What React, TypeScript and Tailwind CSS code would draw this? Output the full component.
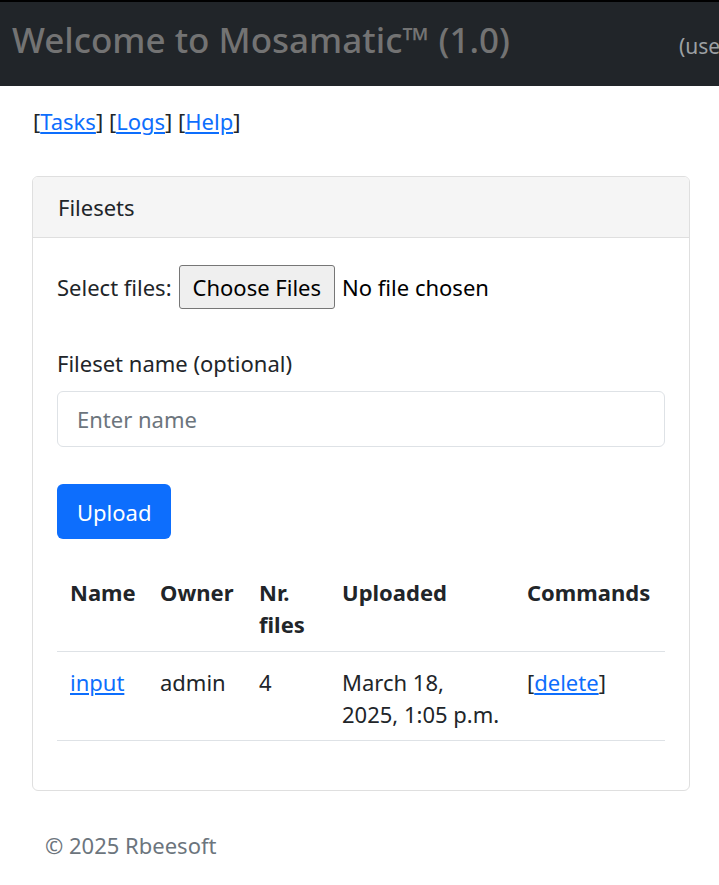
import React from 'react'

const font = { fontFamily: '"Noto Sans", "Open Sans", sans-serif' }

const rows = [
  { name: 'input', owner: 'admin', files: '4', uploaded: 'March 18, 2025, 1:05 p.m.' },
]

export default function App() {
  return (
    <div className="min-h-[885px] bg-white text-[22px] leading-[32px] text-[#212529]" style={font}>
      {/* Header */}
      <header className="h-[86px] bg-[#212529] border-t-2 border-black flex items-center pl-[12px] overflow-hidden whitespace-nowrap">
        <h1 className="w-[667px] shrink-0 text-[35px] leading-none font-medium text-[#737373] pb-[9px]">Welcome to Mosamatic™ (1.0)</h1>
        <span className="shrink-0 text-[#9da0a3] text-[21px] pt-[4px]">(user: admin)</span>
      </header>

      <main className="pl-[32px] pr-[29px]">
        <nav className="pt-[19px] pl-[1px]">
          [<a href="#" className="text-[#0d6efd] underline">Tasks</a>]{' '}
          [<a href="#" className="text-[#0d6efd] underline">Logs</a>]{' '}
          [<a href="#" className="text-[#0d6efd] underline">Help</a>]
        </nav>

        {/* Card */}
        <section className="mt-[39px] border border-[#dfdfdf] rounded-[6px] overflow-hidden">
          <div className="h-[61px] bg-[#f5f5f5] border-b border-[#dfdfdf] px-[25px] flex items-center">Filesets</div>

          <div className="px-[24px] pt-[26px] pb-[49px]">
            <div className="flex items-center h-[46px]">
              <span>Select files:</span>
              <button className="ml-[7px] h-[44px] px-[13px] bg-[#efefef] border border-[#767676] rounded-[3px] text-[#000]">Choose Files</button>
              <span className="ml-[7px] text-[#000]">No file chosen</span>
            </div>

            <label className="block mt-[37px]">Fileset name (optional)</label>
            <input
              placeholder="Enter name"
              className="mt-[12px] block w-full h-[56px] border border-[#dee2e6] rounded-[6px] px-[19px] placeholder:text-[#6c757d] outline-none"
            />

            <button className="mt-[37px] h-[55px] px-[20px] bg-[#0d6efd] text-white rounded-[6px]">Upload</button>

            <table className="mt-[37px] w-full table-fixed border-collapse text-left">
              <thead>
                <tr className="border-b border-[#dee2e6] align-top">
                  <th className="w-[90px] px-[13px] pb-[11px] font-bold">Name</th>
                  <th className="w-[99px] px-[13px] pb-[11px] font-bold">Owner</th>
                  <th className="w-[83px] px-[13px] pb-[11px] font-bold">Nr. files</th>
                  <th className="w-[185px] px-[13px] pb-[11px] font-bold">Uploaded</th>
                  <th className="px-[13px] pb-[11px] font-bold">Commands</th>
                </tr>
              </thead>
              <tbody>
                {rows.map((r) => (
                  <tr key={r.name} className="border-b border-[#dee2e6] align-top">
                    <td className="px-[13px] pt-[14px] pb-[10px]"><a href="#" className="text-[#0d6efd] underline">{r.name}</a></td>
                    <td className="px-[13px] pt-[14px] pb-[10px]">{r.owner}</td>
                    <td className="px-[13px] pt-[14px] pb-[10px]">{r.files}</td>
                    <td className="px-[13px] pt-[14px] pb-[10px]">{r.uploaded}</td>
                    <td className="px-[13px] pt-[14px] pb-[10px]">[<a href="#" className="text-[#0d6efd] underline">delete</a>]</td>
                  </tr>
                ))}
              </tbody>
            </table>
          </div>
        </section>

        <footer className="pt-[38px] pl-[13px] text-[#6c757d]">© 2025 Rbeesoft</footer>
      </main>
    </div>
  )
}
